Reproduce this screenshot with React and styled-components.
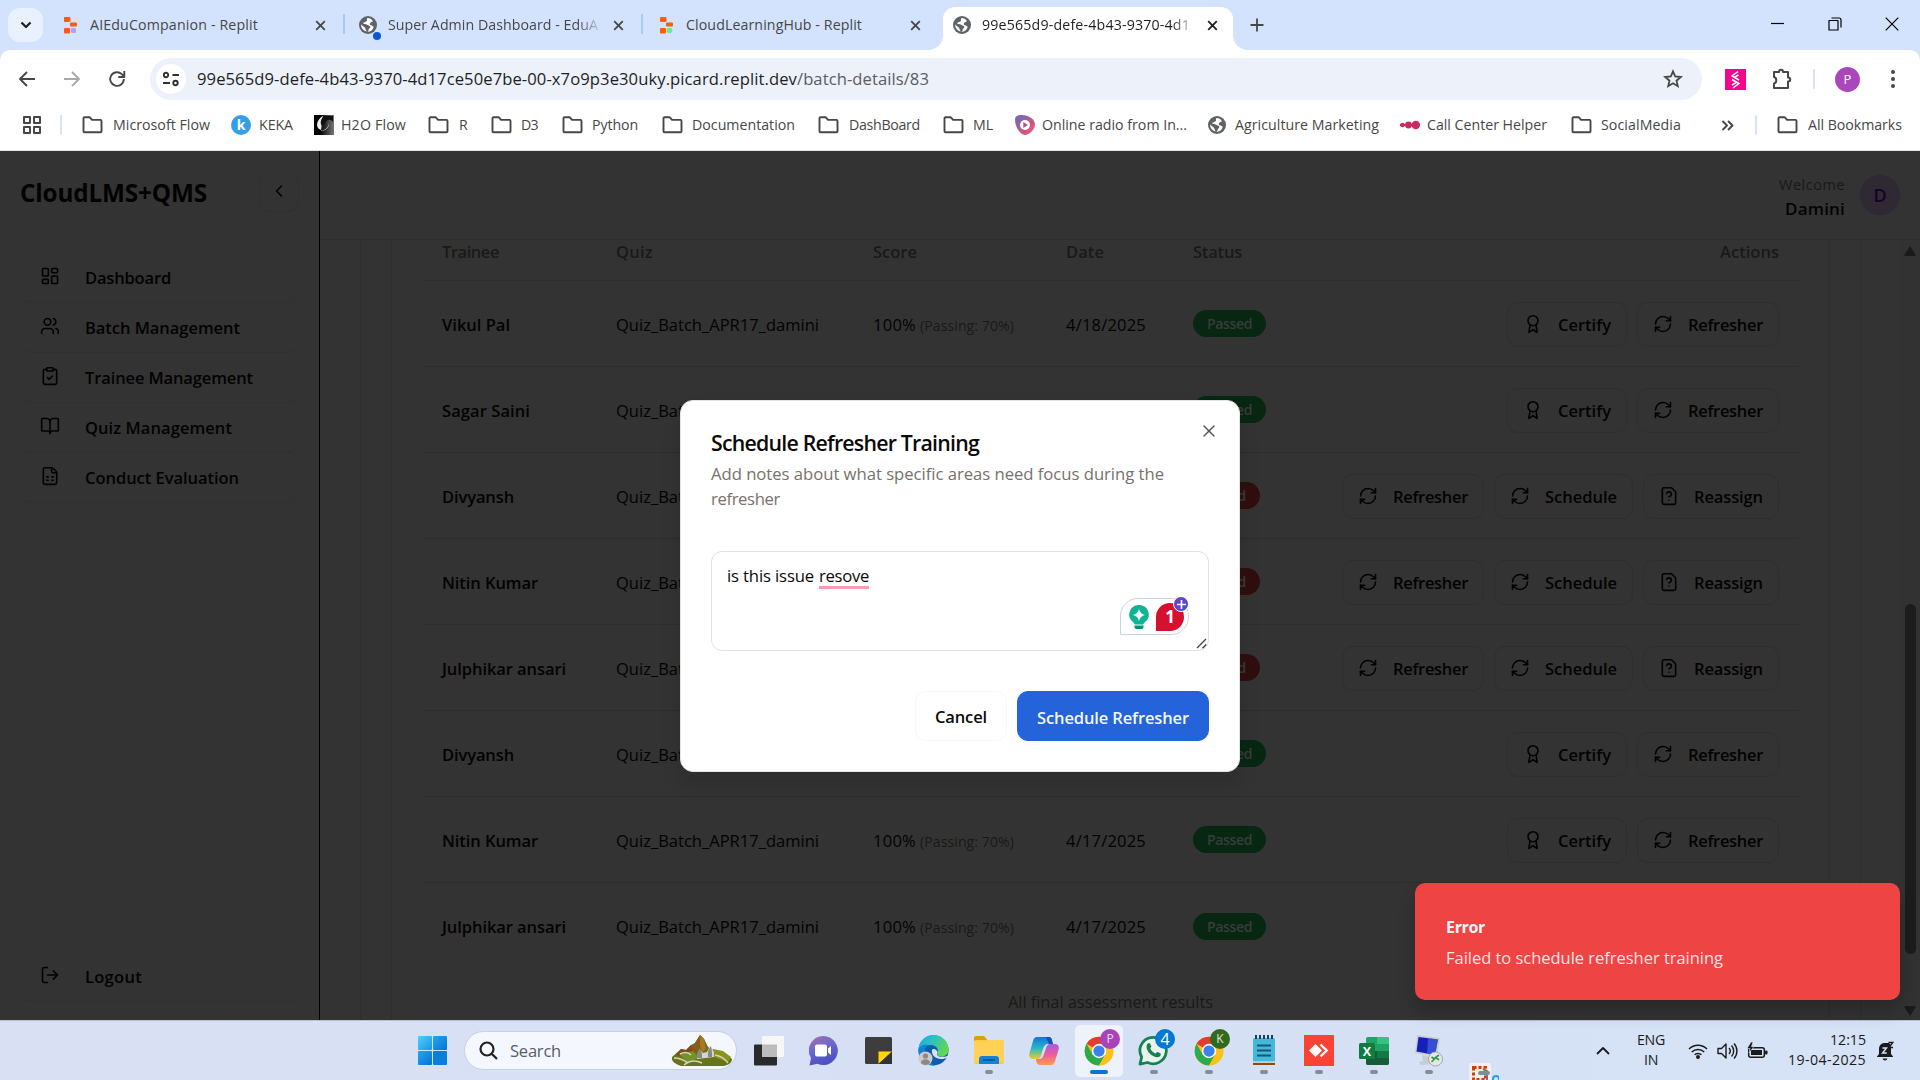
import React, { useLayoutEffect, useRef } from "react";
import styled, { createGlobalStyle, css } from "styled-components";
import {
  LayoutDashboard, Users, ClipboardCheck, BookOpen, FileSpreadsheet, LogOut,
  ChevronLeft, Award, RefreshCw, FileQuestion, X,
} from "lucide-react";

const Global = createGlobalStyle`
  * { box-sizing: border-box; }
  html, body { margin: 0; width: 1920px; height: 1080px; overflow: hidden; background: #333; }
  body { font-family: "Open Sans", "Noto Sans", sans-serif; font-size: 16.5px; color: #1f1f1f; }
  svg { display: block; flex: none; }
`;

/* A run of text that keeps to a set length by adjusting its tracking. */
const TextSpan = styled.span`
  display: inline-block;
  justify-self: start;
  white-space: nowrap;
  flex: none;
  font-size: ${(p) => (p.$size ? p.$size + "px" : "inherit")};
  font-weight: ${(p) => p.$weight || "inherit"};
  color: ${(p) => p.$color || "inherit"};
`;
function Text({ w, size, weight, color, children }) {
  const ref = useRef(null);
  useLayoutEffect(() => {
    const el = ref.current;
    if (!w) return;
    el.style.letterSpacing = "0px";
    const natural = el.getBoundingClientRect().width;
    const gap = (w - natural) / el.textContent.length;
    el.style.letterSpacing = `${gap.toFixed(3)}px`;
  }, [w]);
  return <TextSpan ref={ref} $size={size} $weight={weight} $color={color}>{children}</TextSpan>;
}

const Screen = styled.div`
  width: 1920px; height: 1080px; display: flex; flex-direction: column; overflow: hidden; position: relative;
`;

/* ---------- browser: tab strip ---------- */
const TabStrip = styled.div`
  height: 50px; flex: none; display: flex; background: #d3e3fd; align-items: flex-start;
`;
const TabSearch = styled.div`
  width: 35px; height: 34px; margin: 8px 3px 0 8px; border-radius: 12px; background: #e9f1fe;
  display: flex; align-items: center; justify-content: center;
`;
const Tab = styled.div`
  position: relative; height: 50px; padding: 0 18px 0 14px; width: ${(p) => p.$w}px;
  display: flex; align-items: center; gap: 10px; color: #474747;
`;
const ActiveTab = styled(Tab)`
  margin: 7px 0 0 4px; height: 43px; padding: 0 15px 7px 9px; gap: 10px; background: #fff; border-radius: 12px 12px 0 0; color: #1f1f1f;
  &::before, &::after { content: ""; position: absolute; bottom: 0; width: 14px; height: 14px; }
  &::before { left: -14px; background: radial-gradient(circle at 0 0, transparent 13.5px, #fff 14px); }
  &::after { right: -14px; background: radial-gradient(circle at 100% 0, transparent 13.5px, #fff 14px); }
`;
const TabIcon = styled.div`
  width: 20px; height: 20px; display: flex; align-items: center; justify-content: center; position: relative; flex: none;
`;
const TabTitle = styled.div`
  flex: 1; overflow: hidden; font-size: 14.2px; line-height: 24px; display: flex;
  ${(p) => p.$fade && css`mask-image: linear-gradient(90deg, #000 88%, transparent 100%);`}
`;
const BlueDot = styled.i`
  position: absolute; right: -3px; bottom: -5px; width: 8px; height: 8px; border-radius: 50%; background: #0b57d0;
`;
const Divider = styled.i`
  width: 2px; height: ${(p) => p.$h || 20}px; background: ${(p) => p.$color || "#d3e3fd"}; border-radius: 1px; flex: none; margin: ${(p) => p.$m || 0};
`;
const TabEdge = styled.i`
  position: absolute; right: -1px; top: 14px; width: 2px; height: 20px; background: #a8c7fa;
`;
const WindowButtons = styled.div`
  margin-left: auto; display: flex; height: 47px; padding-right: 0;
`;
const WindowButton = styled.div`
  width: 57px; display: flex; align-items: center; justify-content: center;
`;
const NewTab = styled.div`
  width: 30px; height: 50px; margin-left: 9px; display: flex; align-items: center; justify-content: center;
`;

/* ---------- browser: toolbar & bookmarks ---------- */
const ChromeBody = styled.div`background: #d3e3fd; flex: none;`;
const ChromeInner = styled.div`
  background: #fff; border-radius: 10px 10px 0 0; height: 101px; border-bottom: 1px solid #dfe6e2;
`;
const Toolbar = styled.div`
  height: 58px; display: flex; align-items: center; padding: 0 0 0 17px;
`;
const NavIcons = styled.div`display: flex; gap: 25px; width: 133px;`;
const Omnibox = styled.div`
  width: 1552px; height: 42px; border-radius: 21px; background: #ecf1fa; display: flex; align-items: center; padding: 0 19px 0 6px;
`;
const SiteChip = styled.div`
  width: 30px; height: 30px; border-radius: 50%; background: #fff; margin-right: 11px; display: flex; align-items: center; justify-content: center;
`;
const Url = styled.div`flex: 1; display: flex; font-size: 16.6px; padding-bottom: 1px;`;
const Extensions = styled.div`display: flex; align-items: center; margin-left: 23px;`;
const PuzzleSlot = styled.div`margin-left: 25px;`;
const Avatar = styled.div`
  width: 25px; height: 25px; border-radius: 50%; background: #ab47bc; color: #fff; font-size: 13px;
  display: flex; align-items: center; justify-content: center; margin: 0 30px 0 20px;
`;
const Bookmarks = styled.div`
  height: 34px; display: flex; align-items: center; position: relative; color: #474747; padding-left: 23px;
`;
const Bookmark = styled.div`
  display: flex; align-items: center; gap: ${(p) => p.$gap || 10}px; width: ${(p) => p.$w}px; flex: none; font-size: 14.2px;
  & > span { margin-top: -2px; }
`;

/* ---------- application ---------- */
const Page = styled.div`flex: 1; display: flex; background: #333; color: #030202; min-height: 0;`;
const Sidebar = styled.aside`
  width: 320px; flex: none; border-right: 1px solid #000; padding: 0 20px; display: flex; flex-direction: column;
`;
const SideHead = styled.div`
  height: 102px; display: flex; justify-content: space-between; align-items: flex-start; padding-top: 21px;
`;
const Brand = styled.h1`margin: 0; font-size: 24.3px; line-height: 42px; font-weight: 700;`;
const Collapse = styled.div`
  width: 40px; height: 40px; border: 1px solid #303030; border-top-color: transparent; border-radius: 10px; display: flex; align-items: center; justify-content: center; padding-bottom: 2px;
`;
const NavItem = styled.div`
  height: 50px; border-bottom: 1px solid #303030; border-radius: 12px; padding-left: 20px; display: flex; align-items: center; gap: 25px;
  font-weight: 600; ${(p) => p.$last && "margin-top: auto; margin-bottom: 18px;"}
  & > svg { margin-top: -4px; }
`;
const Main = styled.main`flex: 1; display: flex; flex-direction: column; min-width: 0;`;
const TopBar = styled.header`
  height: 89px; flex: none; border-bottom: 1px solid #2e2e2e; display: flex; justify-content: flex-end; padding: 22px 20px 0 0; gap: 15px;
`;
const UserInfo = styled.div`
  display: flex; flex-direction: column; align-items: flex-end; line-height: 24px;
`;
const UserBadge = styled.div`
  width: 40px; height: 40px; border-radius: 50%; background: #2e2933; color: #17002e; font-weight: 600; font-size: 18px;
  display: flex; align-items: center; justify-content: center; margin-top: 2px;
`;
const Scroller = styled.div`flex: 1; display: flex; min-height: 0; overflow: hidden;`;
const OuterCard = styled.div`
  width: 1501px; margin-left: 40px; padding: 0 30px; border: solid #2e2e2e; border-width: 0 1px; flex: none;
`;
const InnerCard = styled.div`
  height: 100%; padding: 0 30px; border: solid #2e2e2e; border-width: 0 1px;
`;
const gridCols = css`display: grid; grid-template-columns: 174px 257px 193px 127px 1fr; align-items: center; padding: 0 20px;`;
const HeadRow = styled.div`
  ${gridCols} height: 41px; padding-bottom: 18px; border-bottom: 1px solid #2d2d2d; color: #1a1918; font-weight: 600;
`;
const Row = styled.div`
  ${gridCols} height: 86px; border-bottom: ${(p) => (p.$last ? "0" : "1px solid #2d2d2d")};
  padding-top: 1px;
`;
const StatusCell = styled.div`display: flex; align-items: center; justify-content: space-between;`;
const Score = styled.div`display: flex; align-items: baseline; gap: 4px;`;
const Pill = styled.span`
  height: 27px; padding: 0 14px; border-radius: 14px; background: ${(p) => (p.$bad ? "#300e0e" : "#072713")}; color: #393c3a;
  font-size: 14px; font-weight: 600; display: flex; align-items: center; margin-top: -1px;
`;
const Actions = styled.div`display: flex; gap: 10px;`;
const ActionButton = styled.div`
  height: 45px; border: 1px solid #2e2e2e; border-radius: 11px; padding: 0 15px; display: flex; align-items: center; gap: 15px; font-weight: 600;
`;
const Caption = styled.div`height: 64px; display: flex; align-items: center; justify-content: center; color: #1a1918;`;
const ScrollTrack = styled.div`
  margin-left: auto; width: 20px; display: flex; flex-direction: column; align-items: center; justify-content: space-between; background: #323232; padding: 6px 0 4px;
`;
const Thumb = styled.div`width: 11px; height: 350px; border-radius: 6px; background: #1c1c1c; margin: auto 0 52px;`;

/* ---------- dialog & toast ---------- */
const Dialog = styled.section`
  position: absolute; left: 680px; top: 400px; width: 560px; height: 372px; background: #fff; border: 1px solid #e7e5e4; border-radius: 13px;
  padding: 27px 30px 0; display: flex; flex-direction: column; color: #0c0a09; box-shadow: 0 12px 20px rgba(0,0,0,.12);
`;
const DialogClose = styled.div`position: absolute; right: 20px; top: 20px; color: #555;`;
const DialogTitle = styled.h2`margin: 0; font-size: 21.3px; line-height: 29px; font-weight: 600;`;
const DialogNote = styled.p`margin: 4px 0 0; line-height: 25px; font-size: 16.7px; color: #78716c; display: flex; flex-direction: column; align-items: flex-start;`;
const NoteField = styled.div`
  position: relative; height: 100px; margin-top: 40px; border: 1px solid #e2e2e2; border-radius: 11px; padding: 10px 15px; font-size: 16.7px; line-height: 27px; display: flex; gap: 5px;
`;
const Misspelt = styled.span`height: 27px; border-bottom: 3px solid #ff9aae; line-height: 27px;`;
const Assistant = styled.div`
  position: absolute; right: 19px; bottom: 15px; width: 69px; height: 37px; border: 1px solid #cdd2e0; border-radius: 18px 18px 18px 0; background: #fff;
  display: flex; align-items: center; gap: 7px; padding-left: 8px;
`;
const IssueCount = styled.div`
  width: 28px; height: 28px; border-radius: 14px 14px 14px 0; background: #d5112f; color: #fff; font-weight: 700; font-size: 17px; display: flex; align-items: center; justify-content: center;
`;
const PlusDot = styled.div`
  position: absolute; right: -1px; top: -3px; width: 16px; height: 16px; border-radius: 50%; background: linear-gradient(135deg, #7a3fc0, #3a4fe0); border: 1px solid #fff; display: flex; align-items: center; justify-content: center;
`;
const Grip = styled.div`position: absolute; right: 1px; bottom: 1px;`;
const DialogActions = styled.div`display: flex; justify-content: flex-end; gap: 10px; margin-top: 40px;`;
const DialogButton = styled.div`
  height: 50px; width: ${(p) => p.$w}px; border-radius: 11px; display: flex; align-items: center; justify-content: center; font-weight: 600; line-height: 24px;
  border: 1px solid ${(p) => (p.$primary ? "#2563da" : "#f8f8f8")}; background: ${(p) => (p.$primary ? "#2563da" : "#fff")}; color: ${(p) => (p.$primary ? "#f3f7ff" : "#0c0a09")};
  padding-top: ${(p) => (p.$primary ? 3 : 1)}px;
`;
const Toast = styled.section`
  position: absolute; left: 1415px; top: 883px; width: 485px; height: 117px; border-radius: 10px; background: #ef4444; color: #fdf6f6; padding: 32px 31px 0;
  box-shadow: 0 12px 18px rgba(0,0,0,.2); display: flex; flex-direction: column; align-items: flex-start; gap: 5px; line-height: 25px;
`;

/* ---------- taskbar ---------- */
const Taskbar = styled.footer`
  height: 60px; flex: none; border-top: 1px solid #b9bed0; background: linear-gradient(90deg, #d9e0f4, #d6e0f5 60%, #d6e3f6); display: flex; padding-left: 405px; overflow: hidden;
`;
const Slot = styled.div`
  width: 55px; height: 59px; display: flex; align-items: center; justify-content: center; flex: none; position: relative;
`;
const SnipSlot = styled(Slot)`
  justify-content: flex-start; align-items: flex-start; padding: 42px 0 0 13px;
`;
const ActiveSlot = styled.div`
  width: 48px; height: 52px; border-radius: 5px; background: #eef2fb; display: flex; align-items: center; justify-content: center;
`;
const RunMark = styled.i`
  position: absolute; bottom: 6px; left: 50%; transform: translateX(-50%); height: 4px; border-radius: 2px; width: ${(p) => (p.$on ? 18 : 8)}px; background: ${(p) => (p.$on ? "#0a74d6" : "#868b98")};
`;
const CountBadge = styled.div`
  position: absolute; left: 29px; top: 8px; width: 20px; height: 20px; border-radius: 50%; background: ${(p) => p.$color}; color: ${(p) => p.$ink || "#fff"}; font-size: ${(p) => p.$size || 12}px; display: flex; align-items: center; justify-content: center; line-height: 1;
`;
const SearchBox = styled.div`
  width: 273px; height: 39px; margin: 10px 4px 0 4px; border-radius: 20px; background: #f4f7fd; border: 1px solid #c6cfe4; display: flex; align-items: center; padding: 0 3px 0 14px; color: #5a5d66; font-size: 16.5px; gap: 12px; flex: none;
  & > svg:last-child { margin-left: auto; }
`;
const Tray = styled.div`margin-left: auto; display: flex; align-items: center; color: #1b1b1b; font-size: 14.2px; padding-right: 26px;`;
const TwoLine = styled.div`
  display: flex; flex-direction: column; align-items: ${(p) => p.$align}; line-height: 20px; width: ${(p) => p.$w}px; padding-bottom: 1px;
`;
const Language = styled(TwoLine)`margin-left: 6px;`;
const TrayIcons = styled.div`display: flex; align-items: center; gap: 9px; margin-left: 2px;`;

/* ---------- drawings ---------- */
const Stroke = ({ d, s = 16, w = 1.6, c = "#474747", vb, h }) => (
  <svg width={s} height={h || s} viewBox={vb || `0 0 ${s} ${h || s}`} fill="none" stroke={c} strokeWidth={w} strokeLinejoin="round"><path d={d} /></svg>
);
const CloseMark = ({ c = "#474747" }) => <Stroke s={11} w={1.8} c={c} d="M1.2 1.2l8.6 8.6M9.8 1.2L1.2 9.8" />;
const Folder = () => (
  <svg width="21" height="18" viewBox="0 0 21 18" fill="none" stroke="#474747" strokeWidth="1.9" strokeLinejoin="round"><path d="M1.5 3V2.2c0-.5.4-.9.9-.9h5.4l2.3 2.6h8.3c.6 0 1.1.5 1.1 1.1v10.2c0 .6-.5 1.1-1.1 1.1H2.6c-.6 0-1.1-.5-1.1-1.1z" /></svg>
);
const Globe = () => (
  <svg width="18" height="18" viewBox="0 0 18 18"><circle cx="9" cy="9" r="9" fill="#5f6368" /><path d="M8.4 2c-1.200 1.300.4 2-.8 3.300-1.100 1-3 .6-3.400 2.200 1.200 1.300 3.500.4 4.600 1.400 1 .9 2.400.7 2.500 2-.1 1.100-1.400 1.200-1.500 2.300-.1 1-.6 1.800-1.400 2.600 3.200 0 5.700-2 6.400-5-1-.4-1.600-1.500-2.800-1.600-1.200-.2-1.700-1.300-.8-2.300.8-.8 2.300-.6 2.600-1.800C12.900 3.300 10.800 2 8.400 2zM2.100 8.300c-.2 3.400 2 6.300 5.300 7.200.1-1.300-.8-1.700-1-2.900C6.200 11.300 3 10 2.100 8.300z" fill="#fff" /></svg>
);
const Replit = ({ last }) => (
  <svg width="13" height="17" viewBox="0 0 13 17"><rect width="6.500" height="5" rx="1" fill="#ff5c0a" /><rect x="6" y="5.500" width="7" height="4" rx="1" fill="#f26207" /><rect y="11" width="6" height="5.500" rx="1" fill="#ff5c0a" />{last === "dot" ? <circle cx="9.500" cy="13.500" r="2.800" fill="#6ee787" /> : <rect x="7" y="11" width="5" height="5" rx="1.200" fill="#b3a1f7" />}</svg>
);
const ChromeLogo = () => (
  <svg width="30" height="30" viewBox="0 0 48 48">
    <circle cx="24" cy="24" r="23" fill="#fbc116" />
    <path d="M24 24L4.100 12.500A23 23 0 0143.900 12.500H24z" fill="#e33b2e" />
    <path d="M4.100 12.500A23 23 0 0024 47L34 29.800 24 35 14 29.700z" fill="#2da94f" />
    <path d="M43.900 12.500A23 23 0 0124 47l10-17.200A11.500 11.500 0 0034 18.200L30 12.500z" fill="#fbc116" />
    <circle cx="24" cy="24" r="11.500" fill="#fff" /><circle cx="24" cy="24" r="9" fill="#3c7ff0" />
  </svg>
);
const WinLogo = () => (
  <svg width="29" height="29" viewBox="0 0 29 29"><defs><linearGradient id="win" x1="0" y1="0" x2="1" y2="1" gradientUnits="objectBoundingBox"><stop stopColor="#4fd0fb" /><stop offset="1" stopColor="#1795e6" /></linearGradient><linearGradient id="win2" x1="0" y1="0" x2="1" y2="1"><stop stopColor="#26a6ee" /><stop offset="1" stopColor="#0472d4" /></linearGradient></defs><rect width="14" height="14" rx="1" fill="url(#win)" /><rect x="15" width="14" height="14" rx="1" fill="url(#win2)" /><rect y="15" width="14" height="14" rx="1" fill="url(#win2)" /><rect x="15" y="15" width="14" height="14" rx="1" fill="#0a7edb" /></svg>
);
const Landscape = () => (
  <svg width="62" height="31" viewBox="0 0 62 31"><path d="M1 22L10 14l5 1 5-5 4-2 5-8 4 4 4 8 7 4 8 1 9 7c0 4-4 6-8 7H10C5 29 0 27 1 22z" fill="#66751b" /><path d="M24 8l5-8 4 4 3 8-5 4-4-2-5 6-4-3z" fill="#8a5a18" /><path d="M29 0l4 4 2 9-4 5-2-8z" fill="#a9781f" /><path d="M10 14l5 1 5-5 2 8-7 4-10-2z" fill="#7d4c17" /><path d="M8 19l14-3 6 7-12 4z" fill="#74912d" /><path d="M42 14l10 2 8 6-3 5-14-5z" fill="#87941f" /><path d="M13 30c6-5 12-5 18-2M3 23c6 0 10 2 14 5M44 20c6 1 10 4 13 8M9 19c4-2 8-2 11 1" stroke="#d8d3b0" strokeWidth="1.600" fill="none" /><path d="M26 21l3-6 3 3 4-1 3-6 4 6v5l-17 2z" fill="#d6d4cf" /><path d="M26 19l3-6 2 6v4h-5zM37 16l3-5 1 6v5h-4z" fill="#8b8884" /></svg>
);
const TaskView = () => (
  <svg width="30" height="30" viewBox="0 0 30 30"><rect y="8.500" width="23" height="21" rx="1" fill="#2a2a2a" /><rect x="8" width="22" height="21" rx="1" fill="#f7f7f7" /><rect x="8" y="8.500" width="15" height="12.500" fill="#bcbcbc" /></svg>
);
const Chat = () => (
  <svg width="29" height="30" viewBox="0 0 29 30"><defs><linearGradient id="chat" x1="0" y1="0" x2=".4" y2="1"><stop stopColor="#a871ad" /><stop offset=".5" stopColor="#6a68cf" /><stop offset="1" stopColor="#4b4fc4" /></linearGradient></defs><path d="M14.500 0a14.500 14.500 0 11-6 27.800L.5 29.500 2 22A14.500 14.500 0 0114.500 0z" fill="url(#chat)" /><rect x="6" y="8.500" width="12" height="12" rx="2" fill="#fff" /><path d="M19 12.500l3-2.500v9l-3-2.500z" fill="#fff" /></svg>
);
const StickyNotes = () => (
  <svg width="27" height="27" viewBox="0 0 27 27"><rect width="27" height="27" rx="1.500" fill="#3d3d3d" /><path d="M13.500 14.500H27L13.500 27z" fill="#ffd60a" /><path d="M27 14.500V27H13.500z" fill="#333" /></svg>
);
const Edge = () => (
  <svg width="31" height="31" viewBox="0 0 31 31"><defs><linearGradient id="edge" x1="0" y1="0" x2="1" y2=".5"><stop stopColor="#1aa6e8" /><stop offset=".5" stopColor="#2cc4c0" /><stop offset="1" stopColor="#62d84a" /></linearGradient></defs><circle cx="15.500" cy="15.500" r="15" fill="#0d5cb0" /><path d="M.5 14.500A15 15 0 0130.500 15c0 4-3 6.500-7 6.500-3 0-5-1.500-4-3.500 2-4-2-8-7-8C6 10 1 13 .5 14.500z" fill="url(#edge)" /><path d="M.5 16c0-6 6-7 10-6-4 2-5 8-2 13 2 4 5 6 8 7.500C7 31 .5 24 .5 16z" fill="#1183d6" /><path d="M14 14.500c-1 6 4 9.500 9 9.500 3 0 5-.8 6.500-1.800l1-1.700c-2 1.200-4 1.500-7 1.300-3.500-.2-5.500-1.800-4-3.800.8-2-3-5.500-5.500-3.500z" fill="#d9e1f4" /><circle cx="7.500" cy="23.500" r="7" fill="#cbcac7" /><circle cx="7.500" cy="21" r="2.600" fill="#8b8986" /><path d="M3 28c0-5 9-5 9 0-2 2.600-7 2.600-9 0z" fill="#8b8986" /></svg>
);
const Explorer = () => (
  <svg width="30" height="29" viewBox="0 0 30 29"><path d="M0 2a2 2 0 012-2h8l3 3.500V8H0z" fill="#dd9d12" /><rect y="4" width="30" height="24" rx="2" fill="#ffcb3d" /><path d="M0 5.500h11L14 4h14a2 2 0 012 2v20H0z" fill="#ffd155" /><path d="M5 28v-5a3 3 0 013-3h14a3 3 0 013 3v5z" fill="#1383d8" /><path d="M9 24h12" stroke="#0b4d8c" strokeWidth="1.500" /></svg>
);
const Copilot = () => (
  <svg width="30" height="30" viewBox="0 0 30 30"><defs><linearGradient id="cop1" x1="0" y1="0" x2="0" y2="1"><stop stopColor="#1573d8" /><stop offset=".5" stopColor="#28b6c9" /><stop offset="1" stopColor="#e8cf2a" /></linearGradient><linearGradient id="cop2" x1="0" y1="0" x2="0" y2="1"><stop stopColor="#a35be8" /><stop offset=".5" stopColor="#ee5b9b" /><stop offset="1" stopColor="#ff9a4c" /></linearGradient></defs><path d="M8 1h11c2 0 3 1 3.500 3L24 8h-5c-3 0-4 2-5 5l-2 7c-.6 2-2 3-4 3H4c-3 0-4.500-2.500-3.500-6L4 5c.7-2.500 2-4 4-4z" fill="url(#cop1)" /><path d="M22 29H11c-2 0-3-1-3.500-3L7 23h3c3 0 4-2 5-5l2-6c.6-2 2-4 4-4h5c3 0 4.500 2.500 3.500 6L26 25c-.7 2.500-2 4-4 4z" fill="url(#cop2)" /><path d="M17 1h3c2 0 2.500 1 3 3l1 4h-4z" fill="#1b4fb8" /></svg>
);
const WhatsApp = () => (
  <svg width="31" height="31" viewBox="0 0 31 31"><path d="M3.600 22A13.200 13.200 0 119.500 27.500L2 29.200z" fill="#e9f3ee" stroke="#16824f" strokeWidth="2.800" strokeLinejoin="round" /><path d="M9.500 8.700c1-1.200 2.300-1 2.800.2l1 2.400c.3.700-1.200 1.900-1 2.400 1 2.200 2.600 3.700 5 4.700.6.200 1.500-1.700 2.300-1.400l2.700 1.300c1 .5.500 2.300-.6 3.200-2.600 2-7.400-.3-10-3-2.600-2.700-4.300-7-2.200-9.800z" fill="#16824f" /></svg>
);
const Notepad = () => (
  <svg width="24" height="31" viewBox="0 0 24 31"><rect x="1" y="3" width="22" height="25" rx="1.500" fill="#45b7d9" /><path d="M4 0v4M8 0v4M12 0v4M16 0v4M20 0v4" stroke="#16405a" strokeWidth="2" /><path d="M5 10.500h14M5 15.500h14M5 20.500h14" stroke="#175a78" strokeWidth="2.200" /><path d="M1 27.500h22v2.500H1z" fill="#8b4a14" /><path d="M1 26.500h22v1.200H1z" fill="#e8f4f8" /></svg>
);
const AnyDesk = () => (
  <svg width="30" height="31" viewBox="0 0 30 31"><rect width="30" height="31" fill="#fa4235" /><path d="M11.500 9l6.500 6.500-6.500 6.500L5 15.500z" fill="#fff" /><path d="M16.500 9.500l6.200 6-6.200 6" stroke="#fff" strokeWidth="2.400" fill="none" /></svg>
);
const Excel = () => (
  <svg width="30" height="30" viewBox="0 0 30 30"><rect x="7" y="1" width="23" height="28" rx="2" fill="#21a366" /><path d="M18 1h10a2 2 0 012 2v5H18z" fill="#33c481" /><path d="M7 15h11v14H9a2 2 0 01-2-2z" fill="#185c37" /><path d="M18 15h12v7H18z" fill="#107c41" /><path d="M18 22h12v5a2 2 0 01-2 2H18z" fill="#185c37" /><rect y="7" width="16" height="16" rx="1.500" fill="#107c41" /><text x="8" y="19.500" fontSize="12.500" fontWeight="700" fill="#fff" textAnchor="middle">X</text></svg>
);
const RemoteDesktop = () => (
  <svg width="30" height="32" viewBox="0 0 30 32"><path d="M3 0l23 3-3 19L1 18z" fill="#c9ccd0" /><path d="M4.500 2l19.500 2.500-3 15.500L2.500 16.500z" fill="#1420b8" /><path d="M14 3l10 1.500-3 15.500-8-1.500z" fill="#4a6ee6" opacity=".6" /><path d="M8 20l8 2-1 5 4 2-12 1-2-3 4-1z" fill="#c9ccd2" /><circle cx="21.500" cy="24" r="7" fill="#e6e8e8" stroke="#a5a8aa" /><path d="M17.500 22l3 2-3 3M25 20l-3.500 2.500L25 25" stroke="#2ca043" strokeWidth="1.700" fill="none" /></svg>
);
const Snip = () => (
  <svg width="30" height="30" viewBox="0 0 30 30"><rect width="22" height="22" rx="2" fill="#f0f0f0" /><rect x="4.500" y="4.500" width="12" height="12" fill="none" stroke="#d83b01" strokeWidth="3" strokeDasharray="3 2" /><path d="M14 6l4 2v10" stroke="#777" strokeWidth="2" fill="none" /><rect x="9" y="8" width="12" height="4" rx="2" fill="#868b98" /><circle cx="27" cy="16" r="3" fill="none" stroke="#1da1f2" strokeWidth="2" /></svg>
);
const BellSvg = styled.svg`margin-left: 11px;`;
const BellIcon = () => (
  <BellSvg width="17" height="20" viewBox="0 0 17 20"><path d="M7 2a5.500 5.500 0 00-5 5.500V13l-2 2.500V16h16v-.5L14 13V2z" fill="#1b1b1b" /><path d="M5.500 17.500a2.600 2.600 0 005 0z" fill="#1b1b1b" /><path d="M5.500 7h4L5.500 12h4.300" stroke="#d6e3f6" strokeWidth="1.400" fill="none" /><path d="M11.500 1.500h4.300L12 6.500h4" stroke="#1b1b1b" strokeWidth="1.300" fill="#d6e3f6" /></BellSvg>
);

/* ---------- data ---------- */
const nav = [
  ["Dashboard", LayoutDashboard, 86], ["Batch Management", Users, 155], ["Trainee Management", ClipboardCheck, 168],
  ["Quiz Management", BookOpen, 147], ["Conduct Evaluation", FileSpreadsheet, 154],
];
const rows = [
  ["Vikul Pal", 68, "4/18/2025", true], ["Sagar Saini", 88, "4/18/2025", true], ["Divyansh", 72, "4/18/2025", false],
  ["Nitin Kumar", 96, "4/17/2025", false], ["Julphikar ansari", 124, "4/17/2025", false], ["Divyansh", 72, "4/17/2025", true],
  ["Nitin Kumar", 96, "4/17/2025", true], ["Julphikar ansari", 124, "4/17/2025", true],
];
const K = () => (
  <svg width="20" height="20" viewBox="0 0 20 20"><circle cx="10" cy="10" r="10" fill="#359fe3" /><text x="10" y="15" fontSize="14" fontWeight="700" fill="#fff" textAnchor="middle">k</text></svg>
);
const H2O = () => (
  <svg width="20" height="20" viewBox="0 0 20 20"><defs><linearGradient id="h2o"><stop offset=".3" stopColor="#000" /><stop offset="1" stopColor="#777" /></linearGradient></defs><rect width="20" height="20" fill="url(#h2o)" /><path d="M9 1C3 4 1.500 11 5 14c3 2.500 9 1 10-6 .2 5-3.500 8-8 7.500" fill="#eee" /><path d="M10 1C6 4 6 10 8.500 11 11 11.500 11 6 14 5c3-.6 4 1 5 2V1z" fill="#111" /></svg>
);
const Radio = () => (
  <svg width="20" height="20" viewBox="0 0 20 20"><defs><linearGradient id="rad" x1="0" y1="0" x2="1" y2="1"><stop stopColor="#5c6fc9" /><stop offset=".6" stopColor="#c9567f" /><stop offset="1" stopColor="#f0607c" /></linearGradient></defs><path d="M0 4.500C0 1 3 0 7 0c7 0 13 4.500 13 9.500S14 20 10 20 0 13 0 4.500z" fill="url(#rad)" /><circle cx="10" cy="10" r="5" fill="#fff" /><path d="M8.300 7l4.700 3-4.700 3z" fill="#a8569a" /></svg>
);
const Dots = () => (
  <svg width="20" height="20" viewBox="0 0 20 20"><path d="M0 10h20" stroke="#c92b62" strokeWidth="2" /><circle cx="2.500" cy="10" r="2.300" fill="#c92b62" /><circle cx="8.500" cy="10" r="3.400" fill="#c92b62" /><circle cx="15.800" cy="10" r="4.200" fill="#c92b62" /></svg>
);
/* label, text width, slot width, icon, gap */
const marks = [
  ["Microsoft Flow", 97, 149, Folder], ["KEKA", 34, 83, K, 8], ["H2O Flow", 65, 114, H2O, 7], ["R", 9, 63, Folder],
  ["D3", 17, 71, Folder, 9], ["Python", 46, 100, Folder, 9], ["Documentation", 103, 156, Folder, 9], ["DashBoard", 71, 125, Folder],
  ["ML", 20, 72, Folder, 9], ["Online radio from In...", 145, 193, Radio, 7], ["Agriculture Marketing", 144, 192, Globe, 9],
  ["Call Center Helper", 120, 171, Dots, 7], ["SocialMedia", 80, 150, Folder, 9],
];

const Btn = ({ icon: Icon, w, children }) => (
  <ActionButton><Icon size={20} strokeWidth={1.9} /><Text w={w}>{children}</Text></ActionButton>
);

export default function App() {
  return (
    <Screen>
      <Global />
      <TabStrip>
        <TabSearch><Stroke s={12} w={2.200} c="#1f1f1f" d="M1.500 3.500L6 8l4.500-4.500" /></TabSearch>
        <Tab $w={298}><TabIcon><Replit /></TabIcon><TabTitle><Text w={168}>AIEduCompanion - Replit</Text></TabTitle><CloseMark /><TabEdge /></Tab>
        <Tab $w={298}><TabIcon><Globe /><BlueDot /></TabIcon><TabTitle $fade><Text w={210}>Super Admin Dashboard - EduA</Text></TabTitle><CloseMark /><TabEdge /></Tab>
        <Tab $w={297}><TabIcon><Replit last="dot" /></TabIcon><TabTitle><Text w={176}>CloudLearningHub - Replit</Text></TabTitle><CloseMark /></Tab>
        <ActiveTab $w={290}><TabIcon><Globe /></TabIcon><TabTitle $fade><Text w={208}>99e565d9-defe-4b43-9370-4d1</Text></TabTitle><CloseMark c="#1f1f1f" /></ActiveTab>
        <NewTab><Stroke s={14} w={1.800} d="M7 .5v13M.5 7h13" /></NewTab>
        <WindowButtons>
          <WindowButton><Stroke s={13} w={1.200} c="#000" d="M0 6.500h13" /></WindowButton>
          <WindowButton><Stroke s={14} w={1.200} c="#000" d="M1 3.500h9v9.500H1zM3.500 1h7.500c1 0 2 .8 2 2v7.500" /></WindowButton>
          <WindowButton><Stroke s={14} w={1.200} c="#000" d="M.7.7l12.600 12.600M13.300.7L.7 13.300" /></WindowButton>
        </WindowButtons>
      </TabStrip>

      <ChromeBody>
        <ChromeInner>
          <Toolbar>
            <NavIcons>
              <Stroke s={20} w={1.900} d="M18 10H3.500M10 3l-7 7 7 7" />
              <Stroke s={20} w={1.900} c="#a9a9a9" d="M2 10h14.500M10 3l7 7-7 7" />
              <Stroke s={20} w={1.900} d="M16.800 10a6.800 6.800 0 11-2-4.800L17 7.400M17.300 2v6h-6" />
            </NavIcons>
            <Omnibox>
              <SiteChip><Stroke s={16} w={1.900} c="#303030" d="M9.500 4H16M0 12h7M3 1.800a2.200 2.200 0 110 4.400 2.200 2.200 0 010-4.400zM12.500 9.800a2.200 2.200 0 110 4.400 2.200 2.200 0 010-4.400z" /></SiteChip>
              <Url><Text w={600}>99e565d9-defe-4b43-9370-4d17ce50e7be-00-x7o9p3e30uky.picard.replit.dev</Text><Text w={132} color="#5a5d61">/batch-details/83</Text></Url>
              <svg width="20" height="20" viewBox="0 0 20 20" fill="none" stroke="#474747" strokeWidth="1.800"><path d="M10 2.300l2.200 5.200 5.600.5-4.300 3.700 1.300 5.500L10 14.300l-4.800 2.900 1.300-5.500L2.200 8l5.600-.5z" /></svg>
            </Omnibox>
            <Extensions>
              <svg width="21" height="21" viewBox="0 0 21 21"><rect width="21" height="21" fill="#f5058c" /><path d="M13 2.500L7 7l7 4M13.500 6l-4.500 2.500M7 10.500l7 4L8 19M12 13l-5 3" stroke="#fff" strokeWidth="1.500" fill="none" /></svg>
              <PuzzleSlot><svg width="22" height="24" viewBox="0 0 22 24" fill="none" stroke="#474747" strokeWidth="2"><path d="M3 5h5c0-3 4-3 4 0h5v5.500c3 0 3 4 0 4V21H3v-4.500c3-.5 3-6 0-6.500z" strokeLinejoin="round" /></svg></PuzzleSlot>
              <Divider $m="0 0 0 20px" />
              <Avatar>P</Avatar>
              <svg width="6" height="22" viewBox="0 0 6 22" fill="#474747"><circle cx="3" cy="4" r="2" /><circle cx="3" cy="11" r="2" /><circle cx="3" cy="18" r="2" /></svg>
            </Extensions>
          </Toolbar>
          <Bookmarks>
            <Stroke s={18} w={2} d="M1 1h6v6H1zM11 1h6v6h-6zM1 11h6v6H1zM11 11h6v6h-6z" />
            <Divider $m="0 20px 0 19px" />
            {marks.map(([label, w, slot, Icon, gap]) => (
              <Bookmark key={label} $w={slot} $gap={gap}><Icon /><Text w={w}>{label}</Text></Bookmark>
            ))}
            <Stroke s={13} w={1.900} d="M1.500 2l4.500 4.500L1.500 11M7 2l4.500 4.500L7 11" />
            <Divider $m="0 20px 0 21px" />
            <Bookmark $w={130}><Folder /><Text w={94}>All Bookmarks</Text></Bookmark>
          </Bookmarks>
        </ChromeInner>
      </ChromeBody>

      <Page>
        <Sidebar>
          <SideHead><Brand><Text w={187}>CloudLMS+QMS</Text></Brand><Collapse><ChevronLeft size={20} strokeWidth={1.900} /></Collapse></SideHead>
          {nav.map(([label, Icon, w]) => (
            <NavItem key={label}><Icon size={20} strokeWidth={1.900} /><Text w={w}>{label}</Text></NavItem>
          ))}
          <NavItem $last><LogOut size={20} strokeWidth={1.900} /><Text w={57}>Logout</Text></NavItem>
        </Sidebar>
        <Main>
          <TopBar>
            <UserInfo><Text w={66} size={14.5} color="#1a1918">Welcome</Text><Text w={60} weight={600} size={17}>Damini</Text></UserInfo>
            <UserBadge>D</UserBadge>
          </TopBar>
          <Scroller>
            <OuterCard>
              <InnerCard>
                <HeadRow>
                  <Text w={57}>Trainee</Text><Text w={37}>Quiz</Text><Text w={44}>Score</Text><Text w={38}>Date</Text>
                  <StatusCell><Text w={49}>Status</Text><Text w={59}>Actions</Text></StatusCell>
                </HeadRow>
                {rows.map(([name, w, date, pass], i) => (
                  <Row key={i} $last={i === rows.length - 1}>
                    <Text w={w} weight={600}>{name}</Text>
                    <Text w={203}>Quiz_Batch_APR17_damini</Text>
                    <Score><Text w={43}>{pass ? "100%" : "50%"}</Text><Text w={94} size={14} color="#1a1918">(Passing: 70%)</Text></Score>
                    <Text w={80}>{date}</Text>
                    <StatusCell>
                      <Pill $bad={!pass}><Text w={pass ? 45 : 39}>{pass ? "Passed" : "Failed"}</Text></Pill>
                      <Actions>
                        {pass ? (
                          <><Btn icon={Award} w={53}>Certify</Btn><Btn icon={RefreshCw} w={75}>Refresher</Btn></>
                        ) : (
                          <><Btn icon={RefreshCw} w={75}>Refresher</Btn><Btn icon={RefreshCw} w={72}>Schedule</Btn><Btn icon={FileQuestion} w={69}>Reassign</Btn></>
                        )}
                      </Actions>
                    </StatusCell>
                  </Row>
                ))}
                <Caption><Text w={205}>All final assessment results</Text></Caption>
              </InnerCard>
            </OuterCard>
            <ScrollTrack>
              <svg width="12" height="10" viewBox="0 0 12 10" fill="#1a1a1a"><path d="M6 0l5.500 8.500q.3 1.500-1 1.500h-9Q0 10 .5 8.500z" /></svg>
              <Thumb />
              <svg width="12" height="10" viewBox="0 0 12 10" fill="#1a1a1a"><path d="M6 10l5.500-8.500Q11.800 0 10.500 0h-9Q0 0 .5 1.500z" /></svg>
            </ScrollTrack>
          </Scroller>
        </Main>
      </Page>

      <Taskbar>
        <Slot><WinLogo /></Slot>
        <SearchBox>
          <Stroke s={19} w={2.200} c="#222" d="M8 1.500a6.500 6.500 0 110 13 6.500 6.500 0 010-13zM12.600 12.600l5.400 5.400" />
          <Text w={51}>Search</Text><Landscape />
        </SearchBox>
        <Slot><TaskView /></Slot>
        <Slot><Chat /></Slot>
        <Slot><StickyNotes /></Slot>
        <Slot><Edge /></Slot>
        <Slot><Explorer /><RunMark /></Slot>
        <Slot><Copilot /></Slot>
        <Slot><ActiveSlot><ChromeLogo /></ActiveSlot><CountBadge $color="#a843ba" $ink="#f0d8f4">P</CountBadge><RunMark $on /></Slot>
        <Slot><WhatsApp /><CountBadge $color="#0078d4" $size={16}>4</CountBadge><RunMark /></Slot>
        <Slot><ChromeLogo /><CountBadge $color="#33691e" $ink="#dbe6d5">K</CountBadge><RunMark /></Slot>
        <Slot><Notepad /><RunMark /></Slot>
        <Slot><AnyDesk /><RunMark /></Slot>
        <Slot><Excel /><RunMark /></Slot>
        <Slot><RemoteDesktop /><RunMark /></Slot>
        <SnipSlot><Snip /></SnipSlot>
        <Tray>
          <Stroke s={14} h={8} w={1.800} c="#1b1b1b" d="M1 7l6-6 6 6" />
          <Language $align="center" $w={70}><Text w={28}>ENG</Text><Text w={14}>IN</Text></Language>
          <TrayIcons>
            <svg width="20" height="16" viewBox="0 0 20 16" fill="none" stroke="#1b1b1b" strokeWidth="1.500"><path d="M1 6a12.700 12.700 0 0118 0M3.800 9a8.800 8.800 0 0112.400 0M6.600 11.800a4.800 4.800 0 016.800 0" /><circle cx="10" cy="14" r="1.200" fill="#1b1b1b" /></svg>
            <svg width="21" height="18" viewBox="0 0 21 18" fill="none" stroke="#1b1b1b" strokeWidth="1.400"><path d="M1 6.500h3.500L9 2v14l-4.500-4.500H1zM12 6a4.500 4.500 0 010 6M14.500 3.500a8 8 0 010 11M17 1.500a11 11 0 010 15" strokeLinejoin="round" /></svg>
            <svg width="21" height="18" viewBox="0 0 21 18"><rect x="1.700" y="5.700" width="15.600" height="9.600" rx="2" fill="none" stroke="#1b1b1b" strokeWidth="1.500" /><rect x="4" y="8" width="11" height="5" fill="#1b1b1b" /><rect x="18" y="8.500" width="2.500" height="4" rx="1" fill="#1b1b1b" /><path d="M4 0L0 6.500h3L2 11l5-6.500H4.500L6 0z" fill="#1b1b1b" stroke="#d6e2f6" strokeWidth=".6" /></svg>
          </TrayIcons>
          <TwoLine $align="flex-end" $w={98}><Text w={36}>12:15</Text><Text w={78}>19-04-2025</Text></TwoLine>
          <BellIcon />
        </Tray>
      </Taskbar>

      <Dialog>
        <DialogClose><X size={20} strokeWidth={1.700} /></DialogClose>
        <DialogTitle><Text w={268}>Schedule Refresher Training</Text></DialogTitle>
        <DialogNote><Text w={453}>Add notes about what specific areas need focus during the</Text><Text w={69}>refresher</Text></DialogNote>
        <NoteField>
          <Text w={87}>is this issue</Text><Misspelt><Text w={50}>resove</Text></Misspelt>
          <Assistant>
            <svg width="20" height="24" viewBox="0 0 20 24"><path d="M10 0a9.500 9.500 0 016 17l-2 2.500H6L4 17a9.500 9.500 0 016-17z" fill="#0fb492" /><path d="M10 4q1.200 4.800 6 6-4.800 1.200-6 6-1.200-4.800-6-6 4.800-1.200 6-6z" fill="#fff" /><path d="M5.500 20.500h9v1.500q0 2-2 2h-5q-2 0-2-2z" fill="#0a8f78" /></svg>
            <IssueCount>1</IssueCount>
            <PlusDot><Stroke s={9} w={1.600} c="#fff" d="M4.500 0v9M0 4.500h9" /></PlusDot>
          </Assistant>
          <Grip><Stroke s={11} w={1.400} c="#444" d="M1 10l9-9M6.500 10.200l3.700-3.700" /></Grip>
        </NoteField>
        <DialogActions>
          <DialogButton $w={92}><Text w={52}>Cancel</Text></DialogButton>
          <DialogButton $primary $w={192}><Text w={152}>Schedule Refresher</Text></DialogButton>
        </DialogActions>
      </Dialog>

      <Toast>
        <Text w={39} weight={700} size={16}>Error</Text>
        <Text w={277} color="#fde3e3">Failed to schedule refresher training</Text>
      </Toast>
    </Screen>
  );
}
